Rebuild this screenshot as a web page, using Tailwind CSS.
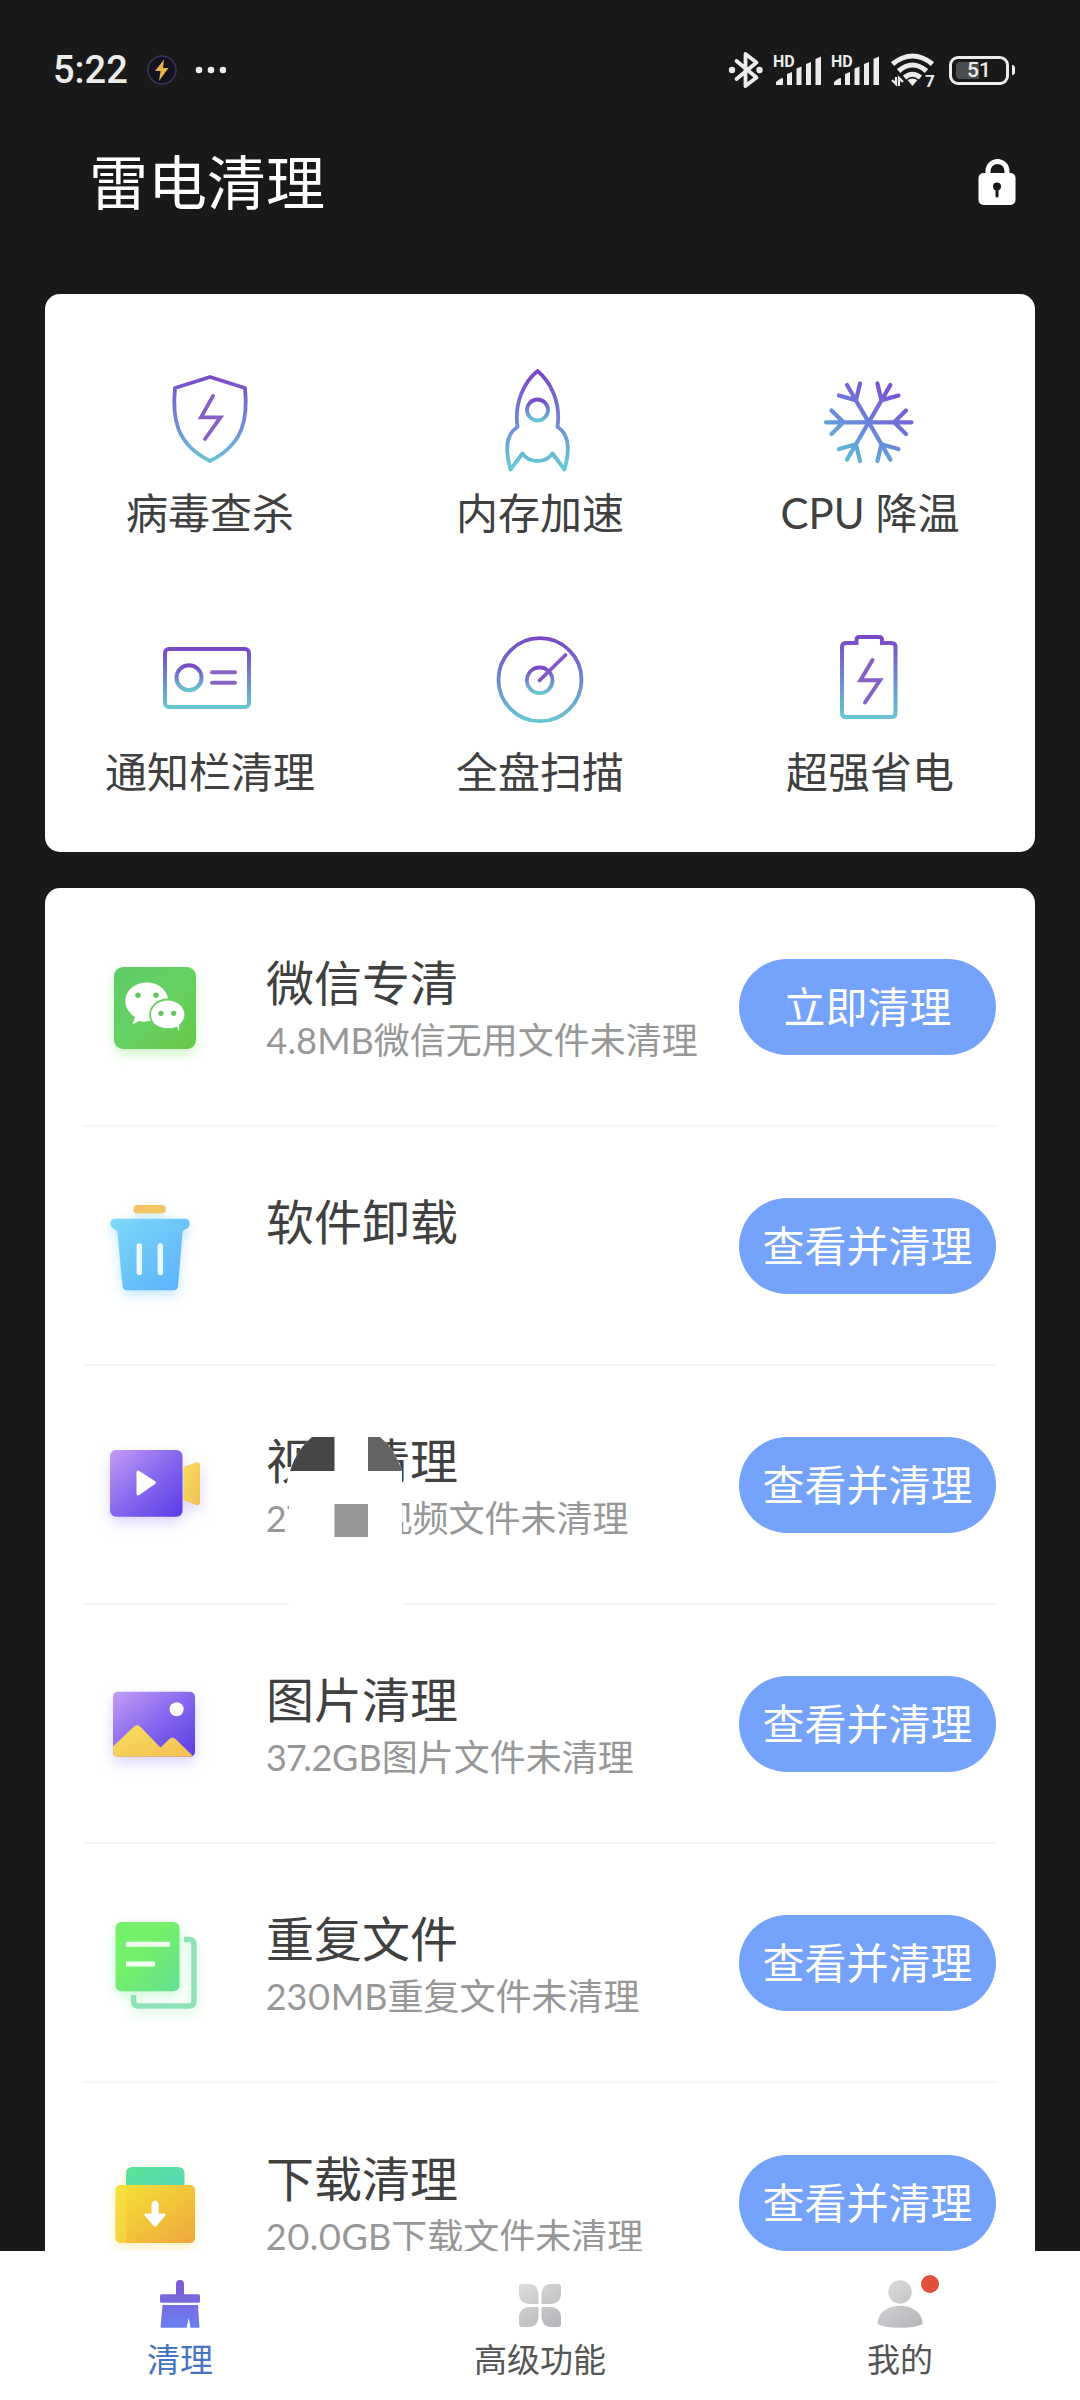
<!DOCTYPE html>
<html lang="zh-CN">
<head>
    <meta charset="UTF-8">
    <meta name="viewport" content="width=device-width, initial-scale=1.0">
    <title>雷电清理</title>
    <script src="https://cdn.jsdelivr.net/npm/@tailwindcss/browser@4"></script>
    <style>
        body {
            font-family: Lato, 'Noto Sans CJK SC', sans-serif;
        }
    </style>
</head>
<body class="flex h-screen flex-col bg-[#191919] text-[#404040]">
    <!-- Shared gradients -->
    <svg class="absolute size-0" aria-hidden="true">
        <defs>
            <linearGradient id="line" gradientUnits="userSpaceOnUse" x1="0" y1="6" x2="0" y2="96">
                <stop offset="0" stop-color="#7a48c4" />
                <stop offset="0.5" stop-color="#7384d6" />
                <stop offset="1" stop-color="#66c6d6" />
            </linearGradient>
            <linearGradient id="ring" x1="0" y1="0" x2="0" y2="1">
                <stop offset="0" stop-color="#7a48c4" />
                <stop offset="0.5" stop-color="#6f86d0" />
                <stop offset="1" stop-color="#66c6d0" />
            </linearGradient>
            <linearGradient id="frost" gradientUnits="userSpaceOnUse" x1="72" y1="20" x2="28" y2="90">
                <stop offset="0" stop-color="#7c50cf" />
                <stop offset="0.5" stop-color="#6a80dc" />
                <stop offset="1" stop-color="#5fbbd8" />
            </linearGradient>
            <linearGradient id="wechat" x1="0" y1="0" x2="1" y2="1">
                <stop offset="0" stop-color="#5fcb68" />
                <stop offset="0.5" stop-color="#66d162" />
                <stop offset="1" stop-color="#68c848" />
            </linearGradient>
            <linearGradient id="bin" x1="0" y1="0" x2="1" y2="1">
                <stop offset="0" stop-color="#7fd9f8" />
                <stop offset="1" stop-color="#58affc" />
            </linearGradient>
            <linearGradient id="violet" x1="0" y1="0" x2="1" y2="1">
                <stop offset="0" stop-color="#c49cf5" />
                <stop offset="0.5" stop-color="#8668ee" />
                <stop offset="1" stop-color="#5a3be8" />
            </linearGradient>
            <linearGradient id="gold" x1="0" y1="0" x2="1" y2="1">
                <stop offset="0" stop-color="#f8de5c" />
                <stop offset="1" stop-color="#f2bf56" />
            </linearGradient>
            <linearGradient id="paper" x1="0" y1="0" x2="1" y2="1">
                <stop offset="0.4" stop-color="#74f06a" />
                <stop offset="1" stop-color="#62e092" />
            </linearGradient>
            <linearGradient id="mint" x1="0" y1="0" x2="1" y2="1">
                <stop offset="0" stop-color="#5ce394" />
                <stop offset="1" stop-color="#54d6c0" />
            </linearGradient>
            <linearGradient id="folder" x1="0" y1="0" x2="1" y2="1">
                <stop offset="0" stop-color="#f5e336" />
                <stop offset="1" stop-color="#f0a63c" />
            </linearGradient>
            <linearGradient id="brush" gradientUnits="userSpaceOnUse" x1="26" y1="2" x2="26" y2="50">
                <stop offset="0" stop-color="#8058d0" />
                <stop offset="1" stop-color="#6a80f2" />
            </linearGradient>
            <linearGradient id="grey" gradientUnits="userSpaceOnUse" x1="10" y1="4" x2="40" y2="50">
                <stop offset="0" stop-color="#dcdcde" />
                <stop offset="1" stop-color="#b6b6ba" />
            </linearGradient>
        </defs>
    </svg>

    <!-- Status bar -->
    <div class="flex h-[140px] shrink-0 items-center justify-between pr-[65px] pl-[53px] text-[#ececec]">
        <div class="flex items-center">
            <span class="font-[Roboto] text-[38px] leading-none font-medium">5:22</span>
            <svg class="ml-[18px] size-[32px]" viewBox="0 0 32 32">
                <circle cx="16" cy="16" r="14" fill="#15121f" stroke="#3c3358" stroke-width="1.5" />
                <path d="M18 5.500 9 17h5.500L13 27l9.500-13H17z" fill="#e8b04a" />
            </svg>
            <svg class="ml-[16px] h-[8px] w-[32px]" viewBox="0 0 32 8" fill="currentColor">
                <circle cx="5" cy="4" r="3.300" /><circle cx="17" cy="4" r="3.300" /><circle cx="29" cy="4" r="3.300" />
            </svg>
        </div>
        <div class="flex items-center gap-[10px]">
            <svg class="h-[38px] w-[36px]" viewBox="0 0 36 38">
                <path d="M9.500 10 29.500 26.500 18.500 35V3L29.500 11.500 9.500 28" fill="none" stroke="currentColor" stroke-width="3.800" stroke-linejoin="round" stroke-linecap="round" />
                <circle cx="5" cy="19" r="3.200" fill="currentColor" /><circle cx="32.500" cy="19" r="3.200" fill="currentColor" />
            </svg>
            <svg class="h-[32px] w-[48px] overflow-visible" viewBox="0 0 48 32" fill="currentColor">
                <text x="0" y="13" class="font-[Roboto] text-[16px] font-bold">HD</text>
                <path d="M3 31v-3q3-3 6-4 1 0 1 1v6zM14 31V20l5-2v13zM23.500 31V14.500l5-2V31zM33 31V10l5-2v23zM42.500 31V5l5.500-2.500V31z" />
            </svg>
            <svg class="h-[32px] w-[48px] overflow-visible" viewBox="0 0 48 32" fill="currentColor">
                <text x="0" y="13" class="font-[Roboto] text-[16px] font-bold">HD</text>
                <path d="M3 31v-3q3-3 6-4 1 0 1 1v6zM14 31V20l5-2v13zM23.500 31V14.500l5-2V31zM33 31V10l5-2v23zM42.500 31V5l5.500-2.500V31z" />
            </svg>
            <svg class="h-[36px] w-[50px] overflow-visible" viewBox="0 0 50 36">
                <g fill="none" stroke="currentColor" stroke-width="5">
                    <path d="M3.500 12q20-16 40 0" /><path d="M9.500 19q14-12 28 0" /><path d="M15.500 25.500q8-6.500 16 0" />
                </g>
                <path d="M18.500 28q5-3 10 0l-5 6z" fill="currentColor" />
                <path d="M3 28l4 4V25M14 30l-4-4v8" fill="none" stroke="currentColor" stroke-width="2.200" />
                <text x="36" y="35" fill="currentColor" class="font-[Roboto] text-[17px] font-bold">7</text>
            </svg>
            <div class="flex items-center gap-[3px]">
                <div class="relative flex h-[29px] w-[60px] items-center justify-center rounded-[9px] border-[3px] border-current">
                    <div class="absolute inset-y-[3px] left-[4px] w-[23px] rounded-l-[4px] bg-[#4c4c4c]"></div>
                    <span class="relative font-[Roboto] text-[21px] leading-[23px] font-medium">51</span>
                </div>
                <div class="h-[10px] w-[3px] rounded-r-full bg-current"></div>
            </div>
        </div>
    </div>

    <!-- Header -->
    <header class="mb-[72px] flex h-[82px] shrink-0 items-center justify-between pr-[64px] pl-[89px] text-white">
        <h1 class="pt-1 text-[59px] leading-[78px]">雷电清理</h1>
        <button type="button" aria-label="应用锁">
            <svg class="h-[48px] w-[38px]" viewBox="0 0 38 48">
                <path d="M10 20v-6a9.500 9.500 0 0 1 19 0v6" fill="none" stroke="#fff" stroke-width="5" />
                <rect x="0.500" y="16" width="37" height="32" rx="5" fill="#fff" />
                <circle cx="19" cy="29.500" r="4" fill="#191919" />
                <path d="M19 30v9" stroke="#191919" stroke-width="3" stroke-linecap="round" />
            </svg>
        </button>
    </header>

    <main class="min-h-0 flex-1 overflow-y-auto px-[45px] [scrollbar-width:none]">
        <!-- Quick tools -->
        <section class="grid grid-cols-3 gap-y-[85px] rounded-[15px] bg-white pt-[74px] pb-[51px] text-[42px] leading-[58px]">
            <button type="button" class="flex flex-col items-center gap-[12px]">
                <svg class="size-[104px]" viewBox="0 0 104 104" fill="none" stroke="url(#line)" stroke-width="3.800">
                    <path d="M52 9 87 20C90 50 86 76 52 93 18 76 14 50 17 20z" stroke-linejoin="round" />
                    <path d="M55 28 43 49.300h19.500L47 71" stroke="#8660c6" stroke-linecap="round" />
                </svg>
                <span>病毒查杀</span>
            </button>
            <button type="button" class="flex flex-col items-center gap-[12px]">
                <svg class="size-[104px]" viewBox="0 0 104 104" fill="none" stroke="url(#line)" stroke-width="3.800" stroke-linejoin="round">
                    <path d="M49.500 3C36 14 26 35 29.500 59 18 66 17 82 22.500 101.500L34.500 85.500C41 95.500 58 95.500 64.500 85.500L76.500 101.500C82 82 81 66 69.500 59 73 35 63 14 49.500 3z" />
                    <circle cx="49.500" cy="42" r="10.500" stroke="url(#ring)" />
                </svg>
                <span>内存加速</span>
            </button>
            <button type="button" class="flex flex-col items-center gap-[12px]">
                <svg class="size-[104px]" viewBox="0 0 104 104" fill="none" stroke="url(#frost)" stroke-width="4.200" stroke-linecap="round">
                    <path d="M8 54.300h85.500M13.500 42.500l12 11.800-12 11.800M88 42.500 76 54.300l12 11.800" />
                    <path d="M29 17 72.400 91.600M42 15.500 38 32.300 21 27.500M59.400 93 63.400 76.300l17 4.800" />
                    <path d="M72.400 17 29 91.600M59.400 15.500l4 16.800 17-4.800M42 93 38 76.300l-17 4.800" />
                </svg>
                <span>CPU 降温</span>
            </button>
            <button type="button" class="flex flex-col items-center gap-[12px]">
                <svg class="size-[104px]" viewBox="0 0 104 104" fill="none" stroke="url(#line)" stroke-width="4">
                    <rect x="7" y="22" width="84" height="58" rx="4" stroke="url(#ring)" />
                    <circle cx="31" cy="50.700" r="12.500" stroke="url(#ring)" />
                    <path d="M54 45.300h23M54 55.700h23" stroke="#8a62c4" stroke-linecap="round" />
                </svg>
                <span>通知栏清理</span>
            </button>
            <button type="button" class="flex flex-col items-center gap-[12px]">
                <svg class="size-[104px]" viewBox="0 0 104 104" fill="none" stroke="url(#line)" stroke-width="3.800">
                    <circle cx="52" cy="52.700" r="41.500" stroke="url(#ring)" />
                    <circle cx="51.700" cy="53.300" r="12.800" stroke="url(#ring)" />
                    <path d="M51.500 53.500 77.500 28" stroke="#8358c6" stroke-linecap="round" />
                </svg>
                <span>全盘扫描</span>
            </button>
            <button type="button" class="flex flex-col items-center gap-[12px]">
                <svg class="size-[104px]" viewBox="0 0 104 104" fill="none" stroke="url(#line)" stroke-width="4">
                    <path d="M38.500 16v-3q0-3 3-3H61q3 0 3 3v3h9.500q4 0 4 4v66q0 4-4 4H28q-4 0-4-4V20q0-4 4-4z" stroke="url(#ring)" />
                    <path d="M54.500 33 42.500 53.300H62L47 75.500" stroke="#8660c6" stroke-linecap="round" />
                </svg>
                <span>超强省电</span>
            </button>
        </section>

        <!-- Clean-up list -->
        <ul class="mt-[36px] rounded-t-[15px] bg-white px-[39px]">
            <li class="flex h-[239px] items-center border-b-2 border-[#f5f5f5] pl-[21px]">
                <svg class="size-[100px] shrink-0 overflow-visible drop-shadow-[0_5px_6px_#68d85a55]" viewBox="0 0 100 100">
                    <rect x="9" y="10" width="82" height="82" rx="9" fill="url(#wechat)" />
                    <path d="M27.500 67.500 30 60C12 48 21 25.500 42 25.500c11 0 20 7 21.300 17.500L48 63q-8 3-14 1z" fill="#fff" />
                    <ellipse cx="62.700" cy="57.500" rx="18.500" ry="16" fill="#66d062" />
                    <path d="M74 74.500 72 69.500C66 72.500 46 73 46 57.500 46 50 53 43.500 62.700 43.500S79.400 50 79.400 57.500q0 5-5 10z" fill="#fff" />
                    <g fill="#62c85e"><circle cx="33" cy="38.300" r="2.700" /><circle cx="51" cy="38.300" r="2.700" /><circle cx="56" cy="56.300" r="2.600" /><circle cx="68.700" cy="56.300" r="2.600" /></g>
                </svg>
                <div class="ml-[61px] flex-1 pt-[6px]">
                    <h2 class="text-[48px] leading-[60px]">微信专清</h2>
                    <p class="h-[54px] text-[36px] leading-[54px] whitespace-nowrap text-[#979797] proportional-nums">4.8MB微信无用文件未清理</p>
                </div>
                <button type="button" class="h-[96px] w-[257px] shrink-0 rounded-full bg-[#75a2fa] text-[42px] leading-[60px] text-white">立即清理</button>
            </li>
            <li class="flex h-[239px] items-center border-b-2 border-[#f5f5f5] pl-[21px]">
                <svg class="size-[100px] shrink-0 overflow-visible drop-shadow-[0_5px_6px_#6cc4fc66]" viewBox="0 0 100 100">
                    <rect x="28.300" y="9" width="32.500" height="8.500" rx="4" fill="#f3c665" />
                    <path d="M10 22.700h70c6 0 6 8 1.500 10q-3.500 1-4 4L73 90q-.5 4.300-5 4.300H22.500q-4.500 0-5-4.300L12.500 36.700q-.5-3-4-4C4 30.700 4 22.700 10 22.700z" fill="url(#bin)" />
                    <path d="M34.300 50v26.500M55.300 50v26.500" stroke="#e8faff" stroke-width="5.500" stroke-linecap="round" />
                </svg>
                <div class="ml-[61px] flex-1 pt-[6px]">
                    <h2 class="text-[48px] leading-[60px]">软件卸载</h2>
                    <p class="h-[54px] text-[36px] leading-[54px] whitespace-nowrap text-[#979797] proportional-nums"></p>
                </div>
                <button type="button" class="h-[96px] w-[257px] shrink-0 rounded-full bg-[#75a2fa] text-[42px] leading-[60px] text-white">查看并清理</button>
            </li>
            <li class="relative flex h-[239px] items-center border-b-2 border-[#f5f5f5] pl-[21px]">
                <svg class="size-[100px] shrink-0 overflow-visible drop-shadow-[0_6px_7px_#7a5cf044]" viewBox="0 0 100 100">
                    <path d="M78.500 32 91 27.500q4-1 4 3V67q0 4-4 3L78.500 65z" fill="url(#gold)" />
                    <rect x="5" y="15" width="72.500" height="66.700" rx="6" fill="url(#violet)" />
                    <path d="M33 37 49.500 47.500 33 59z" fill="#fff" stroke="#fff" stroke-width="3" stroke-linejoin="round" />
                </svg>
                <div class="ml-[61px] flex-1 pt-[6px]">
                    <h2 class="text-[48px] leading-[60px]">视频清理</h2>
                    <p class="h-[54px] text-[36px] leading-[54px] whitespace-nowrap text-[#979797] proportional-nums">271MB视频文件未清理</p>
                </div>
                <button type="button" class="h-[96px] w-[257px] shrink-0 rounded-full bg-[#75a2fa] text-[42px] leading-[60px] text-white">查看并清理</button>
                <!-- Patch lying over the row's text and rule -->
                <svg class="absolute top-[66px] left-[196px] h-[180px] w-[130px]" viewBox="0 0 130 180" aria-hidden="true">
                    <path d="M32 5Q17 17 10 39 4 55 9 66V180H124V110h-2V39Q115 17 100 5z" fill="#fff" />
                    <path d="M54.500 5H32Q17 17 10 39H54.500z" fill="#464646" />
                    <path d="M88 5h12Q115 17 122 39H88z" fill="#646464" />
                    <path d="M54.500 72H88v33H54.500z" fill="#959595" />
                </svg>
            </li>
            <li class="flex h-[239px] items-center border-b-2 border-[#f5f5f5] pl-[21px]">
                <svg class="size-[100px] shrink-0 overflow-visible drop-shadow-[0_6px_7px_#7a5cf044]" viewBox="0 0 100 100">
                    <rect x="8" y="17.700" width="82" height="65" rx="5" fill="url(#violet)" />
                    <path d="M8 72.500 29 52.500q3-2.500 6 0L55.500 73.500 64.500 65q3-2.500 6 0L87.500 81.500q-1 1.200-3 1.200H13q-5 0-5-5z" fill="url(#gold)" />
                    <circle cx="71.600" cy="35.300" r="7" fill="#fff" />
                </svg>
                <div class="ml-[61px] flex-1 pt-[6px]">
                    <h2 class="text-[48px] leading-[60px]">图片清理</h2>
                    <p class="h-[54px] text-[36px] leading-[54px] whitespace-nowrap text-[#979797] proportional-nums">37.2GB图片文件未清理</p>
                </div>
                <button type="button" class="h-[96px] w-[257px] shrink-0 rounded-full bg-[#75a2fa] text-[42px] leading-[60px] text-white">查看并清理</button>
            </li>
            <li class="flex h-[239px] items-center border-b-2 border-[#f5f5f5] pl-[21px]">
                <svg class="size-[100px] shrink-0 overflow-visible drop-shadow-[0_4px_6px_#66e88055]" viewBox="0 0 100 100">
                    <path d="M79 26.500h5q5 0 5 5V88q0 5-5 5H33.500q-5 0-5-5v-6" fill="none" stroke="#8ee2b8" stroke-width="5.500" />
                    <rect x="10.500" y="9" width="64" height="69.300" rx="6" fill="url(#paper)" />
                    <path d="M21 31.300h44M21 51h29" stroke="#f2fff0" stroke-width="5" />
                </svg>
                <div class="ml-[61px] flex-1 pt-[6px]">
                    <h2 class="text-[48px] leading-[60px]">重复文件</h2>
                    <p class="h-[54px] text-[36px] leading-[54px] whitespace-nowrap text-[#979797] proportional-nums">230MB重复文件未清理</p>
                </div>
                <button type="button" class="h-[96px] w-[257px] shrink-0 rounded-full bg-[#75a2fa] text-[42px] leading-[60px] text-white">查看并清理</button>
            </li>
            <li class="flex h-[239px] items-center pl-[21px]">
                <svg class="size-[100px] shrink-0 overflow-visible drop-shadow-[0_4px_6px_#f4d04055]" viewBox="0 0 100 100">
                    <rect x="21" y="14" width="58.500" height="30" rx="6" fill="url(#mint)" />
                    <rect x="10.500" y="32" width="79.500" height="58" rx="5" fill="url(#folder)" />
                    <path d="M15.500 32H21v58h-5.500q-5 0-5-5V37q0-5 5-5z" fill="#f8e048" fill-opacity="0.500" />
                    <path d="M46.500 50.500q3.600-6 7.200 0V60.500h6.300q1.500 1 0 2.500L51.500 73q-1.400 1-2.800 0L40 63q-1.500-1.500 0-2.500h6.500z" fill="#fff" />
                </svg>
                <div class="ml-[61px] flex-1 pt-[6px]">
                    <h2 class="text-[48px] leading-[60px]">下载清理</h2>
                    <p class="h-[54px] text-[36px] leading-[54px] whitespace-nowrap text-[#979797] proportional-nums">20.0GB下载文件未清理</p>
                </div>
                <button type="button" class="h-[96px] w-[257px] shrink-0 rounded-full bg-[#75a2fa] text-[42px] leading-[60px] text-white">查看并清理</button>
            </li>
        </ul>
    </main>

    <!-- Tab bar -->
    <nav class="grid shrink-0 grid-cols-3 bg-white pt-[27px] pb-[19px] text-[33px] leading-[44px] text-[#555]">
        <a href="#clean" class="flex flex-col items-center gap-[7px] text-[#4674c0]" aria-current="page">
            <svg class="size-[52px]" viewBox="0 0 52 52" fill="url(#brush)">
                <path d="M22 16.300V6q0-4 4-4t4 4v10.300h14.500q1.500 0 1.500 1.500v5.500q0 1.500-1.500 1.500H7.500Q6 24.800 6 23.300v-5.500q0-1.500 1.500-1.500z" />
                <path d="M8.500 27h35.500L45.500 49.700H36.500L34.800 40 32.500 49.700H6.500z" />
            </svg>
            <span>清理</span>
        </a>
        <a href="#advanced" class="flex flex-col items-center gap-[7px]">
            <svg class="size-[52px]" viewBox="0 0 52 52" fill="url(#grey)">
                <path d="M8 6h7c6 0 9.500 4 9.500 11v9H16C9 26 5 22 5 15V9q0-3 3-3z" />
                <path d="M44 6h-7c-6 0-9.500 4-9.500 11v9H36c7 0 11-4 11-11V9q0-3-3-3z" />
                <path d="M8 49h7c6 0 9.500-4 9.500-11v-9H16C9 29 5 33 5 40v6q0 3 3 3z" />
                <path d="M44 49h-7c-6 0-9.500-4-9.500-11v-9H36c7 0 11 4 11 11v6q0 3-3 3z" />
            </svg>
            <span>高级功能</span>
        </a>
        <a href="#mine" class="flex flex-col items-center gap-[7px]">
            <span class="relative">
                <svg class="size-[52px]" viewBox="0 0 52 52" fill="url(#grey)">
                    <circle cx="26" cy="14" r="11.700" />
                    <path d="M3.500 46C3.500 35 13 27.700 26 27.700S48.500 35 48.500 46q-6 3.700-22.500 3.700T3.500 46z" />
                </svg>
                <span class="absolute -top-[3px] -right-[13px] size-[18px] rounded-full bg-[#e0503a]"></span>
            </span>
            <span>我的</span>
        </a>
    </nav>
</body>
</html>
